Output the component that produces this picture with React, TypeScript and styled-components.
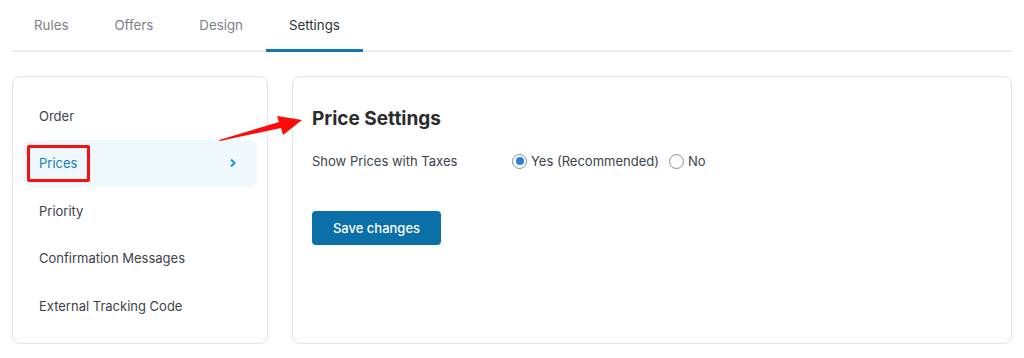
import React from 'react';
import styled, { createGlobalStyle } from 'styled-components';

const GlobalStyle = createGlobalStyle`
    body {
        margin: 0;
        background: #fff;
        font-family: Inter, "Open Sans", "Liberation Sans", sans-serif;
        -webkit-font-smoothing: antialiased;
    }
`;

const Page = styled.div`
    position: relative;
    width: 1024px;
    height: 358px;
    padding: 0 12px;
    box-sizing: border-box;
    overflow: hidden;
`;

const Tabs = styled.div`
    display: flex;
    border-bottom: 2px solid #ebebf0;
    height: 52px;
    box-sizing: border-box;
`;

const Tab = styled.div<{ $active?: boolean }>`
    display: flex;
    align-items: center;
    justify-content: center;
    padding: 0 23px;
    margin-bottom: -2px;
    font-size: 13.3px;
    color: ${(p) => (p.$active ? '#2c3338' : '#7d7f8a')};
    border-bottom: 3px solid ${(p) => (p.$active ? '#1177b0' : 'transparent')};
    box-sizing: border-box;
    height: 52px;
    &:first-child {
        margin-left: -1px;
    }
`;

const Body = styled.div`
    display: flex;
    gap: 24px;
    margin-top: 24px;
`;

const Card = styled.div<{ $w?: string }>`
    border: 1px solid #e3e3ec;
    border-radius: 8px;
    background: #fff;
    box-sizing: border-box;
    height: 268px;
    flex: ${(p) => (p.$w ? `0 0 ${p.$w}` : '1')};
`;

const Menu = styled.div`
    display: flex;
    flex-direction: column;
    padding: 15px 10px 0 10px;
`;

const MenuItem = styled.div<{ $active?: boolean }>`
    display: flex;
    align-items: center;
    justify-content: space-between;
    height: 47.5px;
    padding: 0 20px 0 16px;
    border-radius: 8px;
    font-size: 13px;
    color: ${(p) => (p.$active ? '#1a7ab8' : '#3c434a')};
    background: ${(p) => (p.$active ? '#eef8fd' : 'transparent')};
`;

const Marked = styled.span`
    position: relative;
    &::after {
        content: '';
        position: absolute;
        left: -12px;
        right: -13px;
        top: -10px;
        bottom: -11px;
        border: 3px solid #ff0d0d;
        border-radius: 2px;
    }
`;

const Content = styled.div`
    padding: 28px 19px 0 19px;
`;

const Heading = styled.h2`
    margin: 0 0 16px;
    font-size: 19px;
    font-weight: 700;
    color: #2b2b2f;
    line-height: 28px;
`;

const Row = styled.div`
    display: flex;
    align-items: center;
    font-size: 13px;
    color: #3c434a;
    height: 24px;
`;

const Label = styled.div`
    width: 200px;
`;

const RadioOption = styled.label`
    display: flex;
    align-items: center;
    gap: 4px;
    margin-right: 10px;
`;

const Radio = styled.span<{ $checked?: boolean }>`
    width: 13px;
    height: 13px;
    border-radius: 50%;
    border: 1px solid ${(p) => (p.$checked ? '#6a8fc4' : '#8c8f94')};
    display: inline-flex;
    align-items: center;
    justify-content: center;
    &::after {
        content: '';
        width: 8px;
        height: 8px;
        border-radius: 50%;
        background: ${(p) => (p.$checked ? '#2f7fd6' : 'transparent')};
    }
`;

const SaveButton = styled.button`
    margin-top: 38px;
    width: 129px;
    height: 34px;
    border: none;
    border-radius: 4px;
    background: #0b70a7;
    color: #fff;
    font-family: inherit;
    font-size: 13px;
    font-weight: 500;
`;

const Arrow = styled.svg`
    position: absolute;
    left: 0;
    top: 0;
    pointer-events: none;
`;

const Chevron = () => (
    <svg width="8" height="10" viewBox="0 0 8 10">
        <path d="M2 1.5 L5.5 5 L2 8.5" fill="none" stroke="#1e90e0" strokeWidth="2" />
    </svg>
);

const menu = ['Order', 'Prices', 'Priority', 'Confirmation Messages', 'External Tracking Code'];

export default function App() {
    return (
        <>
            <GlobalStyle />
            <Page>
                <Tabs>
                    <Tab>Rules</Tab>
                    <Tab>Offers</Tab>
                    <Tab>Design</Tab>
                    <Tab $active>Settings</Tab>
                </Tabs>
                <Body>
                    <Card $w="256px">
                        <Menu>
                            {menu.map((m) => (
                                <MenuItem key={m} $active={m === 'Prices'}>
                                    {m === 'Prices' ? <Marked>{m}</Marked> : m}
                                    {m === 'Prices' && <Chevron />}
                                </MenuItem>
                            ))}
                        </Menu>
                    </Card>
                    <Card>
                        <Content>
                            <Heading>Price Settings</Heading>
                            <Row>
                                <Label>Show Prices with Taxes</Label>
                                <RadioOption>
                                    <Radio $checked />
                                    Yes (Recommended)
                                </RadioOption>
                                <RadioOption>
                                    <Radio />
                                    No
                                </RadioOption>
                            </Row>
                            <SaveButton>Save changes</SaveButton>
                        </Content>
                    </Card>
                </Body>
                <Arrow width="1024" height="358">
                    <polygon points="219,140 279,122 277,116 302,120 283,135 281,128 220,141" fill="#ff0a0a" />
                </Arrow>
            </Page>
        </>
    );
}
